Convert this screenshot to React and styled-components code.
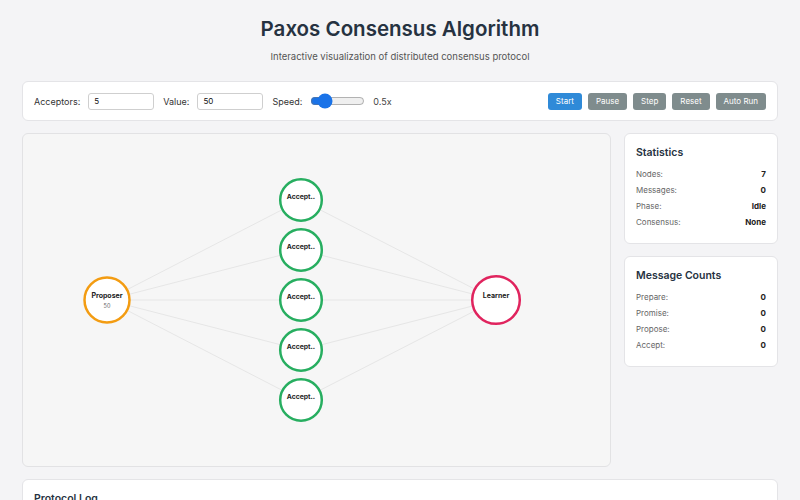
import React from 'react';
import styled, { createGlobalStyle } from 'styled-components';

const GlobalStyle = createGlobalStyle`
  body {
    margin: 0;
    background: #f4f4f6;
    font-family: Inter, "Liberation Sans", sans-serif;
    color: #2c3e50;
  }
`;

const ACCEPTORS = [67, 117, 167, 217, 267];
const PROPOSER = { x: 85, y: 167 };
const LEARNER = { x: 474, y: 167 };
const ACC_X = 279;

const stats = [
  ['Nodes:', '7'],
  ['Messages:', '0'],
  ['Phase:', 'Idle'],
  ['Consensus:', 'None'],
];

const counts = [
  ['Prepare:', '0'],
  ['Promise:', '0'],
  ['Propose:', '0'],
  ['Accept:', '0'],
];

function Graph() {
  return (
    <svg width="588" height="334" viewBox="0 0 588 334">
      {ACCEPTORS.map((y) => (
        <g key={y}>
          <line x1={PROPOSER.x} y1={PROPOSER.y} x2={ACC_X} y2={y} stroke="#e6e6e6" strokeWidth="1" />
          <line x1={ACC_X} y1={y} x2={LEARNER.x} y2={LEARNER.y} stroke="#e6e6e6" strokeWidth="1" />
        </g>
      ))}
      <circle cx={PROPOSER.x} cy={PROPOSER.y} r="22.5" fill="#fff" stroke="#f39c12" strokeWidth="2.5" />
      <NodeLabel x={PROPOSER.x} y={PROPOSER.y - 2} fontSize="7">Proposer</NodeLabel>
      <NodeValue x={PROPOSER.x} y={PROPOSER.y + 8}>50</NodeValue>
      {ACCEPTORS.map((y) => (
        <g key={'a' + y}>
          <circle cx={ACC_X} cy={y} r="20.8" fill="#fff" stroke="#27ae60" strokeWidth="2.5" />
          <NodeLabel x={ACC_X} y={y - 1.5} fontSize="6.8">Accept..</NodeLabel>
        </g>
      ))}
      <circle cx={LEARNER.x} cy={LEARNER.y} r="23.8" fill="#fff" stroke="#e0245e" strokeWidth="2.5" />
      <NodeLabel x={LEARNER.x} y={LEARNER.y - 2} fontSize="7">Learner</NodeLabel>
    </svg>
  );
}

export default function App() {
  return (
    <>
      <GlobalStyle />
      <Page>
        <Header>
          <Title>Paxos Consensus Algorithm</Title>
          <Subtitle>Interactive visualization of distributed consensus protocol</Subtitle>
        </Header>

        <Controls>
          <Field>
            <Label>Acceptors:</Label>
            <TextInput defaultValue="5" />
          </Field>
          <Field>
            <Label>Value:</Label>
            <TextInput defaultValue="50" />
          </Field>
          <Field>
            <Label>Speed:</Label>
            <Slider type="range" min="0" max="3" step="0.1" defaultValue="0.5" />
            <SpeedValue>0.5x</SpeedValue>
          </Field>
          <Buttons>
            <Button $primary>Start</Button>
            <Button>Pause</Button>
            <Button>Step</Button>
            <Button>Reset</Button>
            <Button>Auto Run</Button>
          </Buttons>
        </Controls>

        <Main>
          <Canvas>
            <Graph />
          </Canvas>
          <Side>
            <Card>
              <CardTitle>Statistics</CardTitle>
              {stats.map(([k, v]) => (
                <Row key={k}>
                  <span>{k}</span>
                  <strong>{v}</strong>
                </Row>
              ))}
            </Card>
            <Card>
              <CardTitle>Message Counts</CardTitle>
              {counts.map(([k, v]) => (
                <Row key={k}>
                  <span>{k}</span>
                  <strong>{v}</strong>
                </Row>
              ))}
            </Card>
          </Side>
        </Main>

        <LogCard>
          <CardTitle>Protocol Log</CardTitle>
        </LogCard>
      </Page>
    </>
  );
}

const Page = styled.div`
  padding: 0 22px;
`;

const Header = styled.header`
  text-align: center;
  padding-top: 15px;
`;

const Title = styled.h1`
  margin: 0;
  font-size: 20.5px;
  line-height: 28px;
  font-weight: 600;
  color: #263241;
`;

const Subtitle = styled.p`
  margin: 0;
  padding-top: 7px;
  font-size: 9.5px;
  line-height: 14px;
  color: #555;
`;

const Controls = styled.div`
  margin-top: 17px;
  height: 40px;
  box-sizing: border-box;
  background: #fff;
  border: 1px solid #e4e4e7;
  border-radius: 6px;
  display: flex;
  align-items: center;
  gap: 9px;
  padding: 0 11px;
`;

const Field = styled.div`
  display: flex;
  align-items: center;
  gap: 8px;
`;

const Label = styled.label`
  font-size: 9px;
  color: #333;
`;

const TextInput = styled.input`
  width: 66px;
  height: 17px;
  box-sizing: border-box;
  border: 1px solid #cfcfcf;
  border-radius: 3px;
  padding: 0 5px;
  font-family: inherit;
  font-size: 8px;
  color: #111;
  outline: none;
`;

const Slider = styled.input`
  width: 55px;
  height: 8px;
  margin: 0;
  accent-color: #1a73e8;
`;

const SpeedValue = styled.span`
  font-size: 9px;
  color: #444;
`;

const Buttons = styled.div`
  margin-left: auto;
  display: flex;
  gap: 6px;
`;

const Button = styled.button`
  height: 17px;
  padding: 0 8px;
  border: none;
  border-radius: 3px;
  background: ${(p) => (p.$primary ? '#2f8ad8' : '#7f8c8d')};
  color: #fff;
  font-family: inherit;
  font-size: 8px;
  cursor: pointer;
`;

const Main = styled.div`
  margin-top: 12px;
  display: grid;
  grid-template-columns: 1fr 154px;
  gap: 13px;
  align-items: start;
`;

const Canvas = styled.div`
  height: 334px;
  box-sizing: border-box;
  background: #f6f6f6;
  border: 1px solid #e2e2e4;
  border-radius: 6px;
  overflow: hidden;

  svg {
    display: block;
    margin: -1px;
  }
`;

const NodeLabel = styled.text`
  font-family: Inter, "Liberation Sans", sans-serif;
  font-weight: 700;
  fill: #222;
  text-anchor: middle;
`;

const NodeValue = styled.text`
  font-family: Inter, "Liberation Sans", sans-serif;
  font-size: 5.5px;
  fill: #666;
  text-anchor: middle;
`;

const Side = styled.div`
  display: flex;
  flex-direction: column;
  gap: 12px;
`;

const Card = styled.div`
  background: #fff;
  border: 1px solid #e4e4e7;
  border-radius: 6px;
  padding: 12px 11px 13px;
`;

const CardTitle = styled.h3`
  margin: 0 0 6px;
  font-size: 10.5px;
  line-height: 14px;
  font-weight: 600;
  color: #263241;
`;

const Row = styled.div`
  display: flex;
  justify-content: space-between;
  align-items: center;
  height: 16px;
  font-size: 8px;
  color: #666;

  strong {
    color: #222;
    font-weight: 700;
  }
`;

const LogCard = styled(Card)`
  margin-top: 12px;
  height: 150px;
`;
